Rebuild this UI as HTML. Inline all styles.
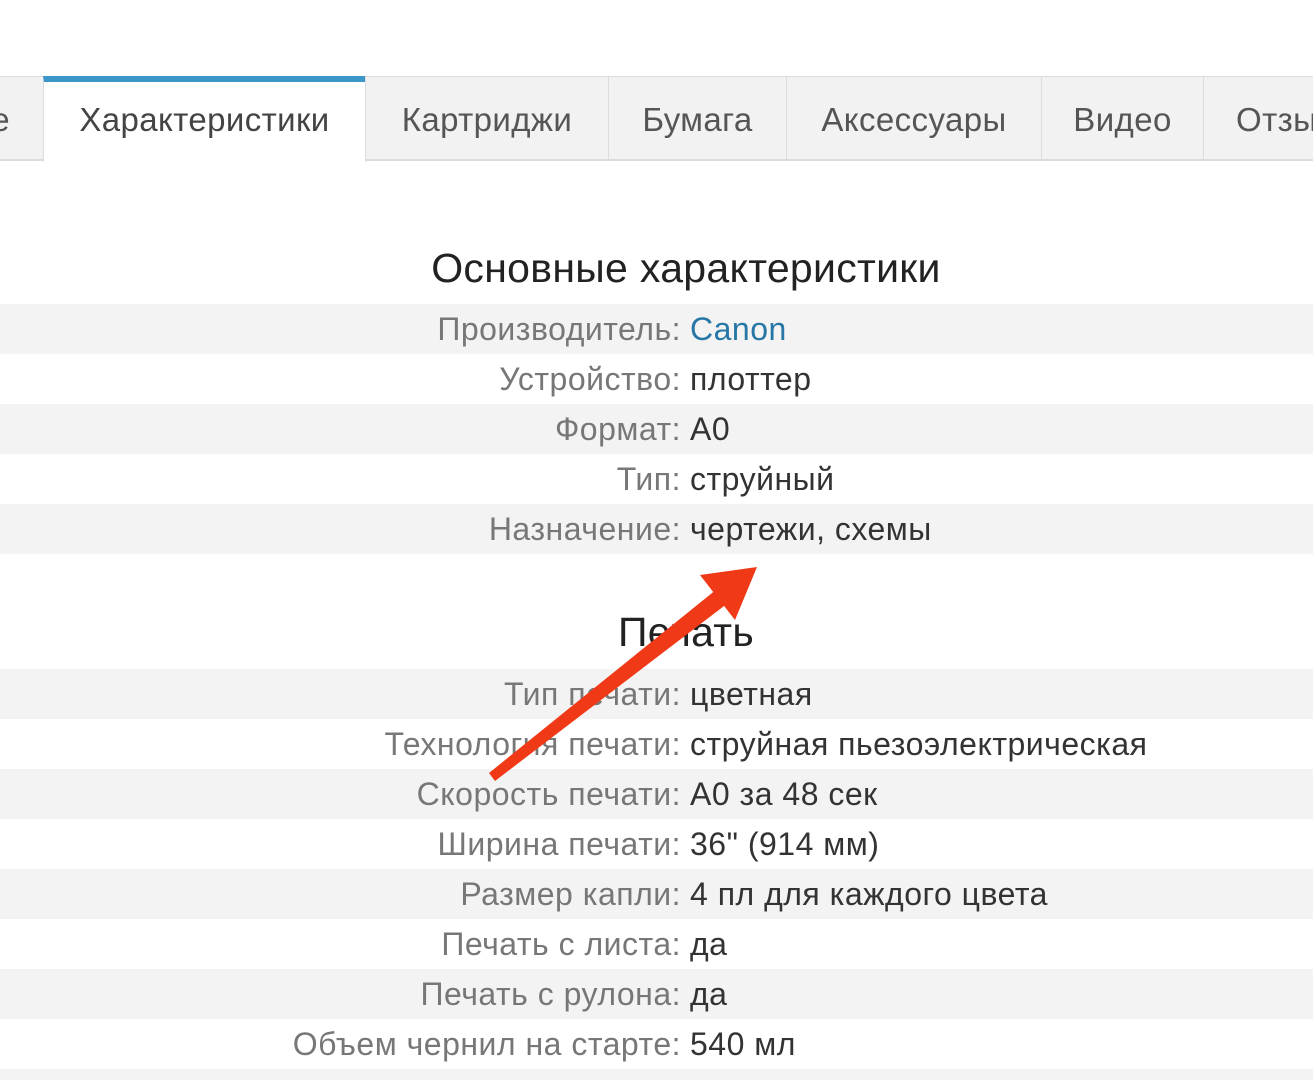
<!DOCTYPE html>
<html><head><meta charset="utf-8"><style>
html,body{margin:0;width:1313px;height:1080px;overflow:hidden}
body{background:#fff;font-family:"Liberation Sans",sans-serif;position:relative}
.tab{position:absolute;top:76px;height:84px;background:#f2f2f2;border:1px solid #dcdcdc;box-sizing:border-box;font-size:33px;color:#555;line-height:86px;text-align:center;letter-spacing:0.4px;white-space:nowrap;overflow:hidden}
.tab.act{background:#fff;border-top:6px solid #3c97c9;border-bottom:none;line-height:76px;height:86px;color:#444}
h2{position:absolute;left:0;width:1372px;text-align:center;margin:0;font-weight:normal;font-size:41px;color:#222;letter-spacing:0.3px}
.row{position:absolute;left:0;width:1313px;height:50px;font-size:32px;line-height:50px;letter-spacing:0.5px}
.row.g{background:#f3f3f3}
.l{position:absolute;right:632px;color:#777;white-space:nowrap}
.v{position:absolute;left:690px;color:#333;white-space:nowrap}
a{color:#2676a6;text-decoration:none}
</style></head><body>
<div class="tab" style="left:-100px;width:144px;text-align:right;padding-right:33px">е</div>
<div class="tab act" style="left:43px;width:323px">Характеристики</div>
<div class="tab" style="left:365px;width:244px">Картриджи</div>
<div class="tab" style="left:608px;width:179px">Бумага</div>
<div class="tab" style="left:786px;width:256px">Аксессуары</div>
<div class="tab" style="left:1041px;width:163px">Видео</div>
<div class="tab" style="left:1203px;width:160px;text-align:left;padding-left:32px">Отзывы</div>
<div style="position:absolute;left:365px;top:160px;width:948px;height:1px;background:#dcdcdc"></div>
<div style="position:absolute;left:0;top:160px;width:43px;height:1px;background:#dcdcdc"></div>

<h2 style="top:245px">Основные характеристики</h2>
<div class="row g" style="top:304px"><span class="l">Производитель:</span><span class="v"><a>Canon</a></span></div>
<div class="row" style="top:354px"><span class="l">Устройство:</span><span class="v">плоттер</span></div>
<div class="row g" style="top:404px"><span class="l">Формат:</span><span class="v">A0</span></div>
<div class="row" style="top:454px"><span class="l">Тип:</span><span class="v">струйный</span></div>
<div class="row g" style="top:504px"><span class="l">Назначение:</span><span class="v">чертежи, схемы</span></div>

<h2 style="top:609px">Печать</h2>
<div class="row g" style="top:669px"><span class="l">Тип печати:</span><span class="v">цветная</span></div>
<div class="row" style="top:719px"><span class="l">Технология печати:</span><span class="v">струйная пьезоэлектрическая</span></div>
<div class="row g" style="top:769px"><span class="l">Скорость печати:</span><span class="v">A0 за 48 сек</span></div>
<div class="row" style="top:819px"><span class="l">Ширина печати:</span><span class="v">36" (914 мм)</span></div>
<div class="row g" style="top:869px"><span class="l">Размер капли:</span><span class="v">4 пл для каждого цвета</span></div>
<div class="row" style="top:919px"><span class="l">Печать с листа:</span><span class="v">да</span></div>
<div class="row g" style="top:969px"><span class="l">Печать с рулона:</span><span class="v">да</span></div>
<div class="row" style="top:1019px"><span class="l">Объем чернил на старте:</span><span class="v">540 мл</span></div>
<div class="row g" style="top:1069px;height:11px"></div>

<svg style="position:absolute;left:0;top:0" width="1313" height="1080">
<polygon points="489,773 495,781 728,603 717,589" fill="#f03a17"/>
<polygon points="757,567 700,575 735,620" fill="#f03a17"/>
</svg>
</body></html>
